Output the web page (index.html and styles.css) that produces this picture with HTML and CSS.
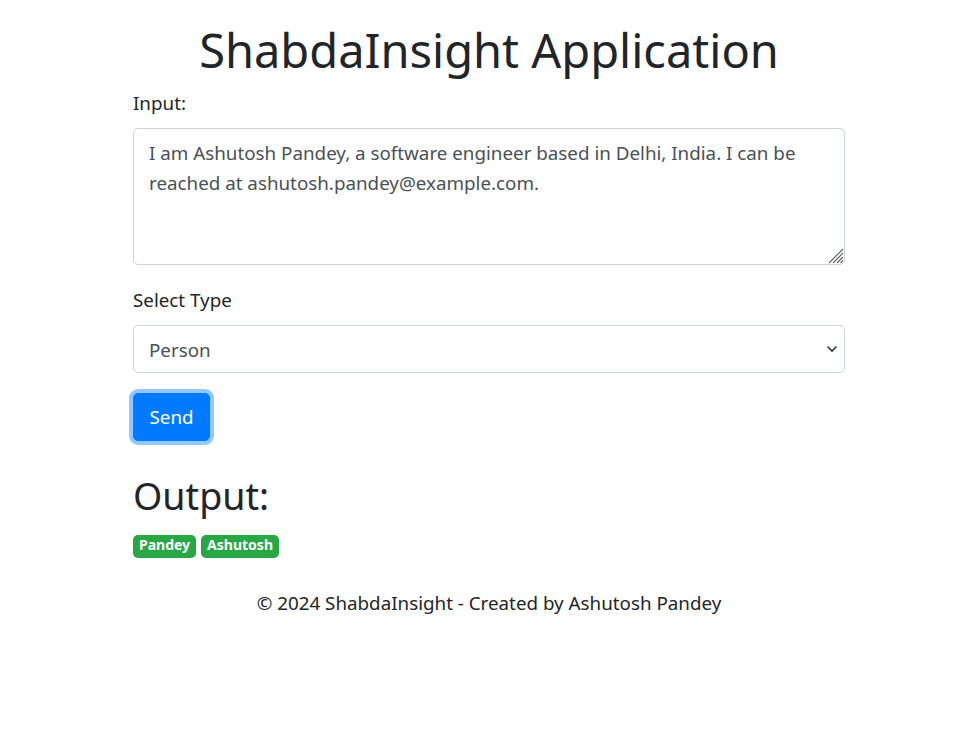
FILE: index.html
```html
<!DOCTYPE html>
<html lang="en">
<head>
<meta charset="utf-8">
<title>ShabdaInsight Application</title>
<link rel="stylesheet" href="styles.css">
</head>
<body>
<div class="container">
  <h1 class="title">ShabdaInsight Application</h1>
  <form class="form">
    <div class="form-group">
      <label class="label" for="inputText">Input:</label>
      <div class="textarea-wrap">
        <textarea id="inputText" class="control textarea">I am Ashutosh Pandey, a software engineer based in Delhi, India. I can be reached at ashutosh.pandey@example.com.</textarea>
        <svg class="resize-grip" width="16" height="16" viewBox="0 0 16 16"><g stroke="#5f5f5f" stroke-width="1.1" fill="none"><line x1="1" y1="15" x2="15" y2="1"/><line x1="5" y1="15" x2="15" y2="5"/><line x1="9" y1="15" x2="15" y2="9"/><line x1="12.5" y1="15" x2="15" y2="12.5"/></g></svg>
      </div>
    </div>
    <div class="form-group">
      <label class="label" for="typeSelect">Select Type</label>
      <div class="select-wrap">
        <select id="typeSelect" class="control select">
          <option>Person</option>
          <option>Location</option>
          <option>Email</option>
        </select>
        <svg class="select-arrow" width="12" height="8" viewBox="0 0 12 8"><polyline points="1.5,1.5 6,6 10.5,1.5" fill="none" stroke="#3a3a3a" stroke-width="1.6"/></svg>
      </div>
    </div>
    <button type="button" class="btn">Send</button>
  </form>
  <h2 class="output-title">Output:</h2>
  <div class="badges">
    <span class="badge">Pandey</span>
    <span class="badge">Ashutosh</span>
  </div>
  <footer class="footer">© 2024 ShabdaInsight - Created by Ashutosh Pandey</footer>
</div>
</body>
</html>
```
FILE: styles.css
```css
* { box-sizing: border-box; }
html, body { margin: 0; padding: 0; background: #fff; }
body {
  font-family: "Segoe UI", "Noto Sans", "Open Sans", sans-serif;
  font-size: 18.8px;
  line-height: 30px;
  color: #212529;
}
.container {
  width: 712px;
  margin: 0 auto;
  padding-top: 20px;
}
.title {
  font-size: 47px;
  font-weight: 400;
  line-height: 60px;
  text-align: center;
  margin: 0 0 8px;
}
.form { margin: 0; }
.form-group {
  display: flex;
  flex-direction: column;
  margin-bottom: 20px;
}
.label {
  display: block;
  margin-bottom: 10px;
  line-height: 30px;
}
.control {
  display: block;
  width: 100%;
  font-family: inherit;
  font-size: 18.8px;
  line-height: 30px;
  color: #495057;
  background: #fff;
  border: 1px solid #ced4da;
  border-radius: 5px;
  padding: 8.5px 15px 6.5px;
  margin: 0;
}
.textarea-wrap { position: relative; }
.textarea {
  height: 137px;
  resize: none;
}
.resize-grip {
  position: absolute;
  right: 1px;
  bottom: 1px;
  pointer-events: none;
}
.select-wrap { position: relative; }
.select {
  height: 48px;
  appearance: none;
  -webkit-appearance: none;
  padding-right: 40px;
}
.select-arrow {
  position: absolute;
  right: 7px;
  top: 19.5px;
  pointer-events: none;
}
.btn {
  display: block;
  font-family: inherit;
  font-size: 18.8px;
  line-height: 30px;
  color: #fff;
  background: #007bff;
  border: 1px solid #007bff;
  border-radius: 5px;
  padding: 8px 15.5px 7.5px;
  margin: 0;
  box-shadow: 0 0 0 4px rgba(38, 143, 255, 0.5);
  cursor: pointer;
}
.output-title {
  font-size: 37.6px;
  font-weight: 400;
  line-height: 48px;
  margin: 31px 0 8px;
}
.badges {
  display: flex;
  gap: 5px;
  height: 30px;
  padding-top: 7px;
}
.badge {
  display: block;
  background: #28a745;
  color: #fff;
  font-size: 14px;
  font-weight: 700;
  line-height: 14px;
  padding: 3.5px 6px;
  border-radius: 5px;
}
.footer {
  text-align: center;
  margin-top: 30px;
  line-height: 30px;
}
```
